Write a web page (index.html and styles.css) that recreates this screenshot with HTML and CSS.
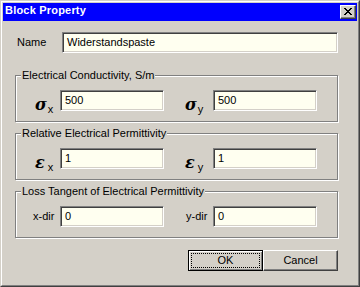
FILE: index.html
```html
<!DOCTYPE html>
<html lang="en">
<head>
<meta charset="utf-8">
<title>Block Property</title>
<link rel="stylesheet" href="styles.css">
</head>
<body>
<div class="window">
  <div class="frame">
    <div class="titlebar">
      <span class="title">Block Property</span>
      <button class="close" type="button" aria-label="Close">
        <svg width="8" height="7" viewBox="0 0 8 7" shape-rendering="crispEdges">
          <rect x="0" y="0" width="2" height="1"/><rect x="6" y="0" width="2" height="1"/>
          <rect x="1" y="1" width="2" height="1"/><rect x="5" y="1" width="2" height="1"/>
          <rect x="2" y="2" width="4" height="1"/>
          <rect x="3" y="3" width="2" height="1"/>
          <rect x="2" y="4" width="4" height="1"/>
          <rect x="1" y="5" width="2" height="1"/><rect x="5" y="5" width="2" height="1"/>
          <rect x="0" y="6" width="2" height="1"/><rect x="6" y="6" width="2" height="1"/>
        </svg>
      </button>
    </div>
    <div class="content">
      <div class="name-row">
        <span class="name-label">Name</span>
        <div class="field wide">Widerstandspaste</div>
      </div>

      <div class="group">
        <div class="legend">Electrical Conductivity, S/m</div>
        <div class="pair-row">
          <span class="cell c1 sym"><span class="greek">σ</span><span class="sub">x</span></span>
          <div class="field">500</div>
          <span class="cell c2 sym"><span class="greek">σ</span><span class="sub">y</span></span>
          <div class="field">500</div>
        </div>
      </div>

      <div class="group">
        <div class="legend">Relative Electrical Permittivity</div>
        <div class="pair-row">
          <span class="cell c1 sym"><span class="greek eps">ε</span><span class="sub sp">x</span></span>
          <div class="field">1</div>
          <span class="cell c2 sym"><span class="greek eps">ε</span><span class="sub sp">y</span></span>
          <div class="field">1</div>
        </div>
      </div>

      <div class="group">
        <div class="legend">Loss Tangent of Electrical Permittivity</div>
        <div class="pair-row">
          <span class="cell c1 txt">x-dir</span>
          <div class="field">0</div>
          <span class="cell c2 txt">y-dir</span>
          <div class="field">0</div>
        </div>
      </div>

      <div class="buttons">
        <button class="btn default" type="button"><span class="focus">OK</span></button>
        <button class="btn" type="button">Cancel</button>
      </div>
    </div>
  </div>
</div>
</body>
</html>
```
FILE: styles.css
```css
* { box-sizing: border-box; }

html, body {
  margin: 0;
  padding: 0;
  background: #d4d0c8;
}

body {
  font-family: "Liberation Sans", Arial, sans-serif;
  font-size: 11px;
  line-height: 13px;
  color: #000;
}

.window {
  width: 360px;
  height: 287px;
  border: 1px solid;
  border-color: #d4d0c8 #404040 #404040 #d4d0c8;
  background: #d4d0c8;
}

.frame {
  height: 100%;
  border: 1px solid;
  border-color: #fff #808080 #808080 #fff;
  padding: 1px;
  display: flex;
  flex-direction: column;
}

.titlebar {
  height: 18px;
  background: #0000fe;
  display: flex;
  align-items: center;
  justify-content: space-between;
  padding: 0 1px 0 2px;
}

.title {
  color: #fff;
  font-weight: bold;
  letter-spacing: 0.2px;
  align-self: flex-start;
  padding-top: 1px;
}

.close {
  width: 16px;
  height: 14px;
  padding: 0;
  margin: 0;
  background: #d4d0c8;
  border: 1px solid;
  border-color: #fff #404040 #404040 #fff;
  box-shadow: inset -1px -1px #808080;
  display: flex;
  align-items: center;
  justify-content: center;
}

.close svg {
  display: block;
  fill: #000;
  margin: 0 1px 1px 0;
}

.content {
  flex: 1;
  padding: 11px 19px 0 12px;
  display: flex;
  flex-direction: column;
}

.name-row {
  display: flex;
  align-items: center;
  height: 21px;
}

.name-label {
  width: 47px;
  padding-left: 2px;
}

.field {
  height: 21px;
  width: 104px;
  background: #fffff0;
  border: 1px solid;
  border-color: #808080 #fff #fff #808080;
  box-shadow: inset 1px 1px #404040, inset -1px -1px #d4d0c8;
  padding-left: 4px;
  line-height: 19px;
  white-space: nowrap;
  overflow: hidden;
}

.field.wide {
  flex: 1;
  width: auto;
}

.group {
  margin-top: 11px;
  border: 1px solid #808080;
  box-shadow: inset 1px 1px #fff, 1px 1px #fff;
  display: flex;
  flex-direction: column;
}

.name-row + .group {
  margin-top: 22px;
}

.legend {
  width: fit-content;
  margin: -7px 0 0 5px;
  padding: 0 1px;
  background: #d4d0c8;
  white-space: nowrap;
}

.pair-row {
  display: flex;
  height: 21px;
  margin: 8px 0 10px;
}

.cell {
  flex: none;
}

.c1 { width: 44px; padding-left: 19px; }
.c2 { width: 49px; padding-left: 21px; }

.txt {
  line-height: 21px;
}
.txt.c1 { padding-left: 17px; }
.txt.c2 { padding-left: 22px; }

.sym {
  white-space: nowrap;
  line-height: 21px;
  padding-top: 4px;
}

.greek {
  font-family: "DejaVu Serif", "Liberation Serif", serif;
  font-weight: bold;
  font-style: italic;
  font-size: 16px;
}

.sub {
  font-family: "Liberation Sans", Arial, sans-serif;
  font-size: 11px;
  vertical-align: -3px;
  margin-left: 1px;
}

.sub.sp {
  margin-left: 3px;
}

.buttons {
  margin-top: 12px;
  display: flex;
  justify-content: flex-end;
}

.btn {
  width: 75px;
  height: 21px;
  margin: 0;
  padding: 0;
  background: #d4d0c8;
  font: inherit;
  color: #000;
  border: 1px solid;
  border-color: #fff #404040 #404040 #fff;
  box-shadow: inset -1px -1px #808080;
  display: flex;
  align-items: center;
  justify-content: center;
}

.btn.default {
  border-color: #000;
  box-shadow: inset 1px 1px #fff, inset -1px -1px #808080;
  padding: 2px;
  align-items: stretch;
}

.focus {
  flex: 1;
  border: 1px dotted #000;
  display: flex;
  align-items: center;
  justify-content: center;
}
```
